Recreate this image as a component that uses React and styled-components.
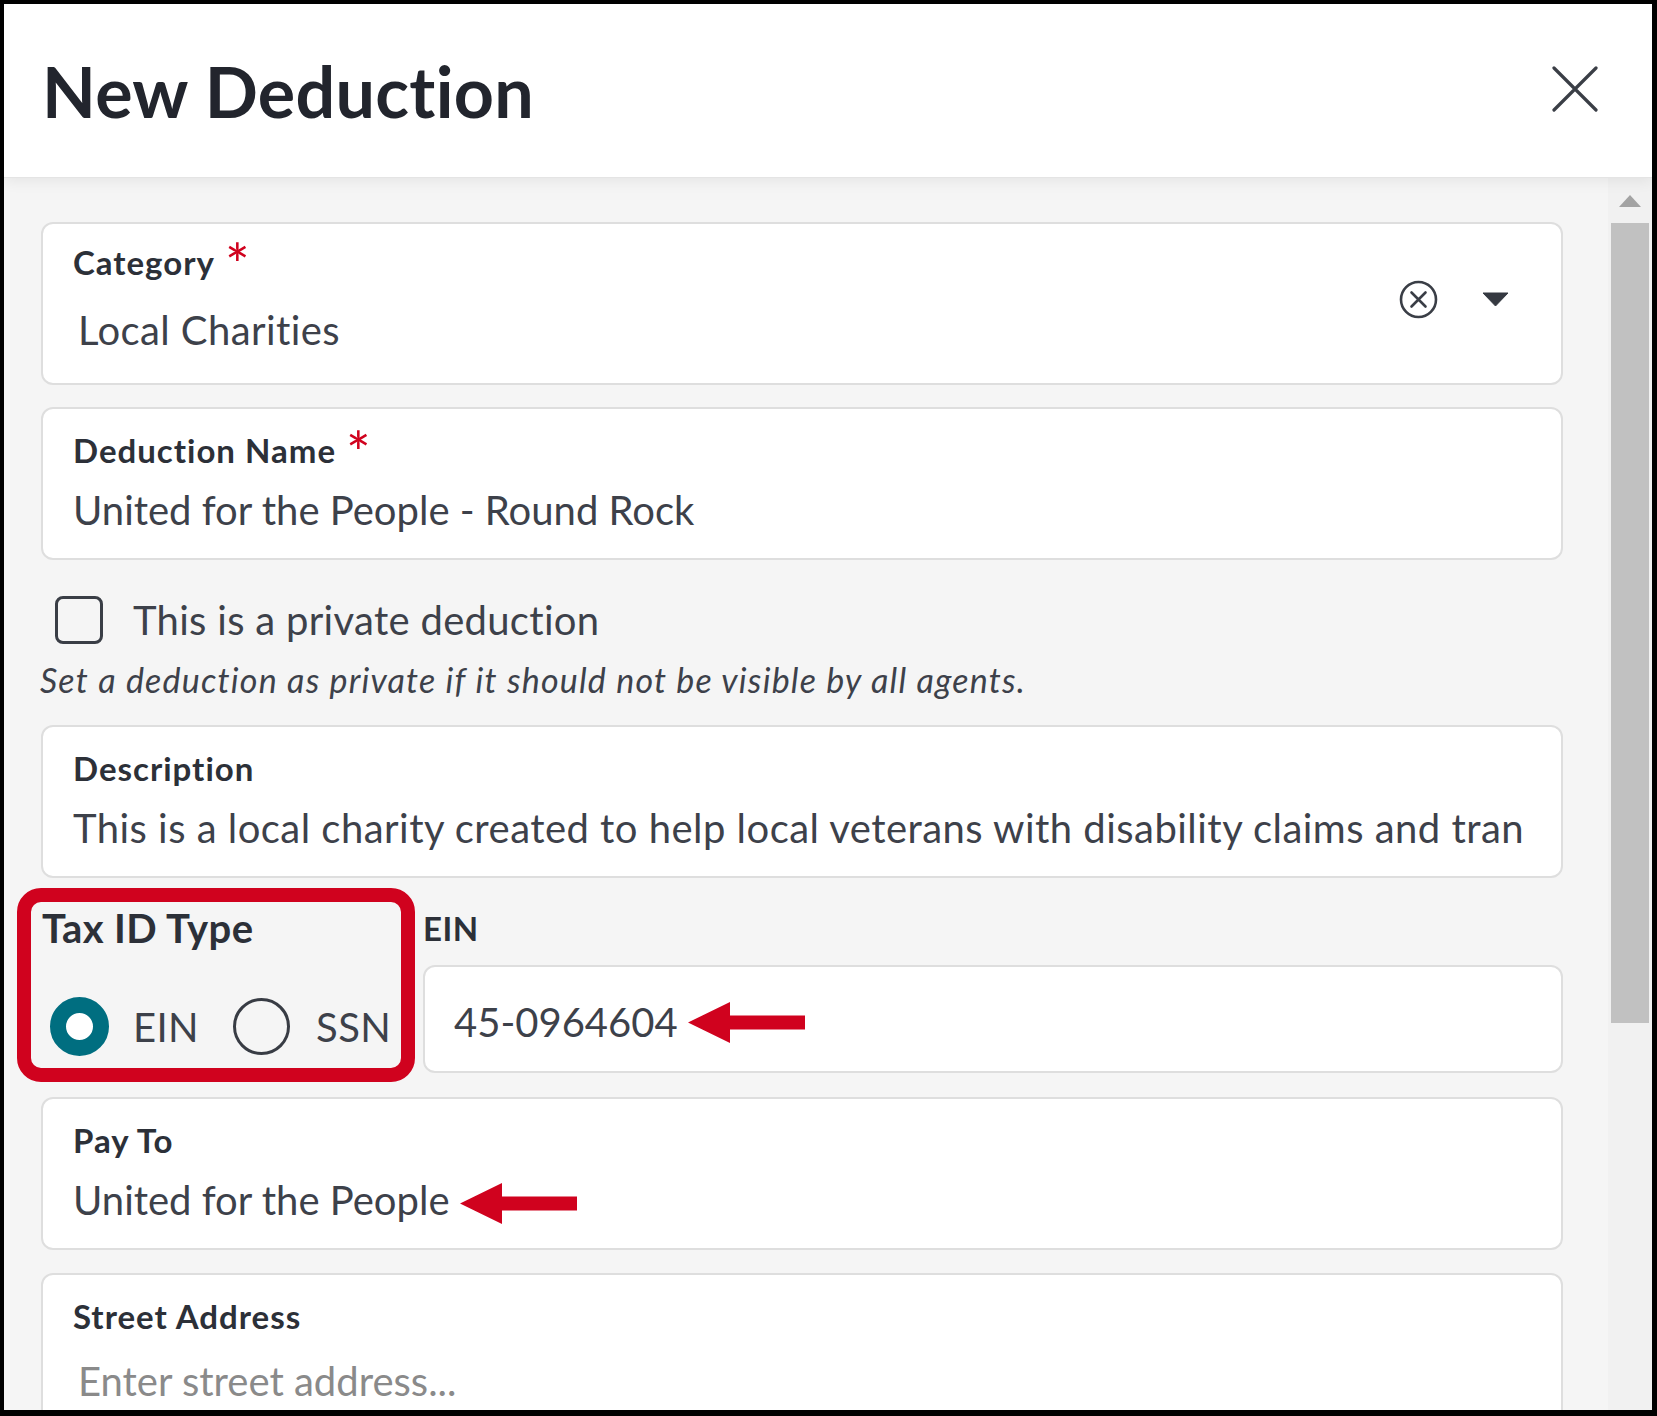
import React from 'react'
import styled, { createGlobalStyle } from 'styled-components'

const GlobalStyle = createGlobalStyle`
  * {
    box-sizing: border-box;
  }
  body {
    margin: 0;
    background: #fff;
    font-family: Lato, 'Noto Sans', sans-serif;
  }
`

const Frame = styled.div`
  width: 1657px;
  height: 1416px;
  border: solid #000;
  border-width: 4px 5px 6px 4px;
  display: flex;
  flex-direction: column;
  overflow: hidden;
  background: #f5f5f5;
`

const Header = styled.header`
  flex: none;
  height: 173px;
  display: flex;
  align-items: center;
  justify-content: space-between;
  padding: 0 54px 0 38px;
  background: #fff;
  position: relative;
  z-index: 1;
  box-shadow: 0 1px 0 #e4e4e4, 0 4px 14px rgba(0, 0, 0, 0.07);
`

const Title = styled.h1`
  margin: 0;
  font-size: 70px;
  font-weight: 700;
  letter-spacing: 0.3px;
  color: #22252d;
`

const CloseButton = styled.button`
  border: 0;
  background: none;
  padding: 0;
  margin-top: -4px;
  width: 46px;
  height: 46px;
  display: flex;
  cursor: pointer;
`

const Body = styled.div`
  flex: 1;
  min-height: 0;
  display: flex;
`

const Scroller = styled.div`
  flex: 1;
  overflow: hidden;
  padding: 45px 45px 0 37px;
  display: flex;
  flex-direction: column;
`

const ScrollTrack = styled.div`
  flex: none;
  width: 44px;
  background: #f1f1f1;
  display: flex;
  flex-direction: column;
  align-items: center;
  padding-top: 18px;
`

const ScrollArrow = styled.div`
  width: 0;
  height: 0;
  border-left: 11px solid transparent;
  border-right: 11px solid transparent;
  border-bottom: 12px solid #a3a3a3;
`

const ScrollThumb = styled.div`
  margin-top: 16px;
  width: 38px;
  height: 800px;
  background: #c1c1c1;
`

const Field = styled.div`
  flex: none;
  display: flex;
  align-items: center;
  margin-top: ${(p) => p.$mt || 0}px;
  padding: ${(p) => (p.$select ? '18px 52px 29px 30px' : '21px 38px 24px 30px')};
  background: #fff;
  border: 2px solid #dedede;
  border-radius: 12px;
`

const FieldMain = styled.div`
  flex: 1;
  min-width: 0;
`

const Label = styled.div`
  font-size: 33px;
  line-height: 40px;
  font-weight: 700;
  letter-spacing: 1px;
  color: #2c3038;
`

const Required = styled.span`
  display: inline-block;
  margin-left: 10px;
  font-size: 58px;
  line-height: 0;
  font-weight: 400;
  letter-spacing: 0;
  color: #d0021e;
  position: relative;
  top: 11px;
`

const Value = styled.div`
  display: flex;
  align-items: center;
  margin-top: ${(p) => p.$gap}px;
  padding-left: ${(p) => (p.$inset ? 5 : 0)}px;
  font-size: 40px;
  line-height: 48px;
  letter-spacing: ${(p) => p.$tracking || 0}px;
  color: ${(p) => (p.$placeholder ? '#8a8a8a' : '#3d414a')};
  white-space: nowrap;
  overflow: hidden;
`

const SelectIcons = styled.div`
  display: flex;
  align-items: center;
  gap: 44px;
  margin-top: 2px;
`

const CheckRow = styled.label`
  display: flex;
  align-items: center;
  margin: 36px 0 0 14px;
  font-size: 40px;
  line-height: 48px;
  letter-spacing: 0.3px;
  color: #3d414a;
`

const CheckBox = styled.span`
  width: 48px;
  height: 48px;
  margin-right: 30px;
  border: 3.5px solid #3a3e46;
  border-radius: 8px;
`

const Hint = styled.p`
  margin: 16px 0 0 -1px;
  font-size: 34px;
  line-height: 40px;
  font-style: italic;
  letter-spacing: 1.2px;
  color: #3d414a;
`

const TaxRow = styled.div`
  display: flex;
  align-items: flex-start;
  margin-top: 10px;
`

const Highlight = styled.div`
  flex: none;
  width: 398px;
  margin-left: -24px;
  padding: 2px 8px 12px 11px;
  border: 14px solid #d0021e;
  border-radius: 24px;
`

const GroupTitle = styled.div`
  font-size: 40px;
  line-height: 48px;
  font-weight: 700;
  letter-spacing: 0.4px;
  color: #2c3038;
`

const RadioRow = styled.div`
  display: flex;
  align-items: center;
  margin: 45px 0 0 8px;
  font-size: 40px;
  line-height: 48px;
  letter-spacing: 0.4px;
  color: #3d414a;
`

const Radio = styled.span`
  flex: none;
  width: ${(p) => (p.$checked ? 59 : 57)}px;
  height: ${(p) => (p.$checked ? 59 : 57)}px;
  margin: 0 ${(p) => (p.$checked ? 24 : 26)}px 0 ${(p) => (p.$checked ? 0 : 34)}px;
  border-radius: 50%;
  border: ${(p) => (p.$checked ? '16.5px solid #006e80' : '3px solid #383c44')};
  background: ${(p) => (p.$checked ? '#fff' : 'transparent')};
`

const EinField = styled.div`
  flex: 1;
  margin-left: 8px;
`

const EinLabel = styled(Label)`
  margin-top: 20px;
  letter-spacing: 0.5px;
`

const EinInput = styled.div`
  height: 108px;
  margin-top: 17px;
  display: flex;
  align-items: center;
  padding: 6px 29px 0;
  font-size: 40px;
  line-height: 48px;
  color: #3d414a;
  background: #fff;
  border: 2px solid #dedede;
  border-radius: 12px;
`

const Arrow = styled.svg`
  flex: none;
  margin-left: ${(p) => p.$gap}px;
  margin-top: ${(p) => p.$drop || 0}px;
`

function PointerArrow({ gap, drop }) {
  return (
    <Arrow $gap={gap} $drop={drop} width="117" height="41" viewBox="0 0 117 41">
      <polygon
        points="0,20.5 42,0 42,13.5 117,13.5 117,27.5 42,27.5 42,41"
        fill="#d0021e"
      />
    </Arrow>
  )
}

export default function App() {
  return (
    <>
      <GlobalStyle />
      <Frame>
        <Header>
          <Title>New Deduction</Title>
          <CloseButton aria-label="Close">
            <svg width="46" height="46" viewBox="0 0 46 46">
              <path
                d="M2 2 L44 44 M44 2 L2 44"
                stroke="#3a3e46"
                strokeWidth="3.2"
                strokeLinecap="round"
              />
            </svg>
          </CloseButton>
        </Header>
        <Body>
          <Scroller>
            <Field $select>
              <FieldMain>
                <Label>
                  Category<Required>*</Required>
                </Label>
                <Value $gap={24} $inset $tracking={0.4}>
                  Local Charities
                </Value>
              </FieldMain>
              <SelectIcons>
                <svg width="39" height="39" viewBox="0 0 39 39">
                  <circle cx="19.5" cy="19.5" r="17.5" fill="none" stroke="#3a3e46" strokeWidth="2.6" />
                  <path
                    d="M12.5 12.5 L26.5 26.5 M26.5 12.5 L12.5 26.5"
                    stroke="#3a3e46"
                    strokeWidth="2.6"
                    strokeLinecap="round"
                  />
                </svg>
                <svg width="27" height="15" viewBox="0 0 27 15">
                  <path d="M1 1 L26 1 L13.5 14 Z" fill="#353941" stroke="#353941" strokeLinejoin="round" />
                </svg>
              </SelectIcons>
            </Field>

            <Field $mt={22}>
              <FieldMain>
                <Label>
                  Deduction Name<Required>*</Required>
                </Label>
                <Value $gap={16}>United for the People - Round Rock</Value>
              </FieldMain>
            </Field>

            <CheckRow>
              <CheckBox />
              This is a private deduction
            </CheckRow>
            <Hint>Set a deduction as private if it should not be visible by all agents.</Hint>

            <Field $mt={25}>
              <FieldMain>
                <Label>Description</Label>
                <Value $gap={16} $tracking={0.47}>
                  This is a local charity created to help local veterans with disability claims and transportation to appointments.
                </Value>
              </FieldMain>
            </Field>

            <TaxRow>
              <Highlight>
                <GroupTitle>Tax ID Type</GroupTitle>
                <RadioRow>
                  <Radio $checked />
                  EIN
                  <Radio />
                  SSN
                </RadioRow>
              </Highlight>
              <EinField>
                <EinLabel>EIN</EinLabel>
                <EinInput>
                  45-0964604
                  <PointerArrow gap={10} />
                </EinInput>
              </EinField>
            </TaxRow>

            <Field $mt={15}>
              <FieldMain>
                <Label>Pay To</Label>
                <Value $gap={16}>
                  United for the People
                  <PointerArrow gap={10} drop={6} />
                </Value>
              </FieldMain>
            </Field>

            <Field $mt={23}>
              <FieldMain>
                <Label>Street Address</Label>
                <Value $gap={21} $inset $placeholder>
                  Enter street address...
                </Value>
              </FieldMain>
            </Field>
          </Scroller>
          <ScrollTrack>
            <ScrollArrow />
            <ScrollThumb />
          </ScrollTrack>
        </Body>
      </Frame>
    </>
  )
}
